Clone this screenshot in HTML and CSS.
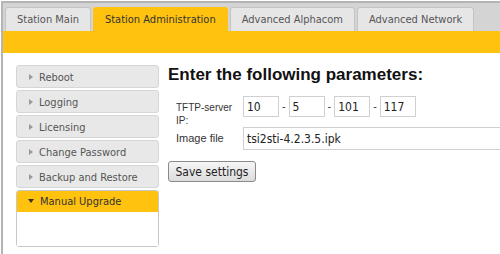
FILE: index.html
```html
<!DOCTYPE html>
<html lang="en">

<head>
    <meta charset="UTF-8">
    <meta name="viewport" content="width=device-width, initial-scale=1.0">
    <title>Station Administration</title>
    <link rel="stylesheet" href="styles.css">
</head>

<body>

    <div class="frame">
        <ul class="tabs">
            <li class="tab">Station Main</li>
            <li class="tab active">Station Administration</li>
            <li class="tab">Advanced Alphacom</li>
            <li class="tab">Advanced Network</li>
        </ul>
        <div class="bar"></div>

        <div class="content">
            <div class="sidebar">
                <div class="item">Reboot</div>
                <div class="item">Logging</div>
                <div class="item">Licensing</div>
                <div class="item">Change Password</div>
                <div class="item">Backup and Restore</div>
                <div class="panel">
                    <div class="panel-head">Manual Upgrade</div>
                    <div class="panel-body"></div>
                </div>
            </div>

            <div class="main">
                <h1>Enter the following parameters:</h1>
                <form class="params">
                    <label class="tftp"><span class="nowrap">TFTP-server</span> IP:</label>
                    <div class="ip">
                        <input type="text" value="10">
                        <span>-</span>
                        <input type="text" value="5">
                        <span>-</span>
                        <input type="text" value="101">
                        <span>-</span>
                        <input type="text" value="117">
                    </div>
                    <label>Image file</label>
                    <input type="text" class="file" value="tsi2sti-4.2.3.5.ipk">
                </form>
                <button type="button" class="save">Save settings</button>
            </div>
        </div>
    </div>

</body>

</html>
```

FILE: styles.css
```css
body {
    margin: 1px 0 0 1px;
    background-color: #ffffff;
    font-family: "DejaVu Sans Condensed", "DejaVu Sans", sans-serif;
    font-stretch: condensed;
    color: #444;
    overflow: hidden;
}

.frame {
    border-top: 2px solid #b4b4b4;
    border-left: 2px solid #b4b4b4;
    height: 260px;
}

.tabs {
    list-style: none;
    margin: 0;
    padding: 4px 0 0 2px;
    background-color: #d4d4d4;
    display: flex;
    gap: 2px;
}

.tab {
    height: 23px;
    line-height: 23px;
    padding: 0 11px;
    font-size: 11px;
    color: #555;
    background-color: #e6e6e6;
    border: 1px solid #c4c4c4;
    border-bottom: none;
    border-radius: 3px 3px 0 0;
}

.tab.active {
    background-color: #ffc20e;
    border-color: #ffc20e;
    color: #333;
}

.bar {
    height: 22px;
    background-color: #ffc20e;
}

.content {
    display: flex;
    gap: 9px;
    padding: 12px 0 0 13px;
}

.sidebar {
    width: 143px;
    flex-shrink: 0;
}

.item {
    height: 23px;
    line-height: 23px;
    margin-bottom: 2px;
    padding-left: 12px;
    font-size: 11px;
    color: #555;
    background-color: #e8e8e8;
    border: 1px solid #d6d6d6;
    border-radius: 3px;
    box-sizing: border-box;
}

.item::before {
    content: "";
    display: inline-block;
    border-left: 4px solid #999;
    border-top: 3px solid transparent;
    border-bottom: 3px solid transparent;
    margin-right: 6px;
    vertical-align: 1px;
}

.panel {
    border: 1px solid #c8c8c8;
    border-radius: 3px;
}

.panel-head {
    height: 21px;
    line-height: 21px;
    padding-left: 11px;
    font-size: 11px;
    color: #333;
    background-color: #ffc20e;
    border-radius: 2px 2px 0 0;
}

.panel-head::before {
    content: "";
    display: inline-block;
    border-top: 4px solid #333;
    border-left: 3px solid transparent;
    border-right: 3px solid transparent;
    margin-right: 6px;
    vertical-align: 2px;
}

.panel-body {
    height: 34px;
    background-color: #fff;
}

.main {
    flex-grow: 1;
}

h1 {
    margin: 0;
    font-family: "Liberation Sans", Arial, sans-serif;
    font-stretch: normal;
    font-size: 17px;
    font-weight: bold;
    line-height: 20px;
    color: #111;
}

.params {
    display: grid;
    grid-template-columns: 67px auto;
    margin: 11px 0 0 8px;
    align-items: center;
}

.params label {
    font-family: "Liberation Sans", Arial, sans-serif;
    font-stretch: normal;
    font-size: 11px;
    line-height: 13px;
    color: #333;
}

.params .tftp {
    align-self: start;
    padding: 5px 4px 0 0;
    font-size: 10px;
}

.nowrap {
    white-space: nowrap;
}

.ip {
    display: flex;
    align-items: center;
    gap: 3px;
    align-self: start;
}

.ip span {
    font-size: 11px;
    color: #333;
}

input {
    font-family: "DejaVu Sans Condensed", "DejaVu Sans", sans-serif;
    font-stretch: condensed;
    font-size: 12px;
    color: #222;
    border: 1px solid #d0d0d0;
    padding: 0 3px;
    margin: 0;
    box-sizing: border-box;
    height: 21px;
}

.ip input {
    width: 36px;
}

.file {
    width: 280px;
    height: 23px;
}

.save {
    margin-top: 11px;
    width: 88px;
    height: 21px;
    padding: 0;
    font-family: "DejaVu Sans Condensed", "DejaVu Sans", sans-serif;
    font-stretch: condensed;
    font-size: 12px;
    color: #222;
    background: linear-gradient(#f6f6f6, #dcdcdc);
    border: 1px solid #8a8a8a;
    border-radius: 3px;
}
```
